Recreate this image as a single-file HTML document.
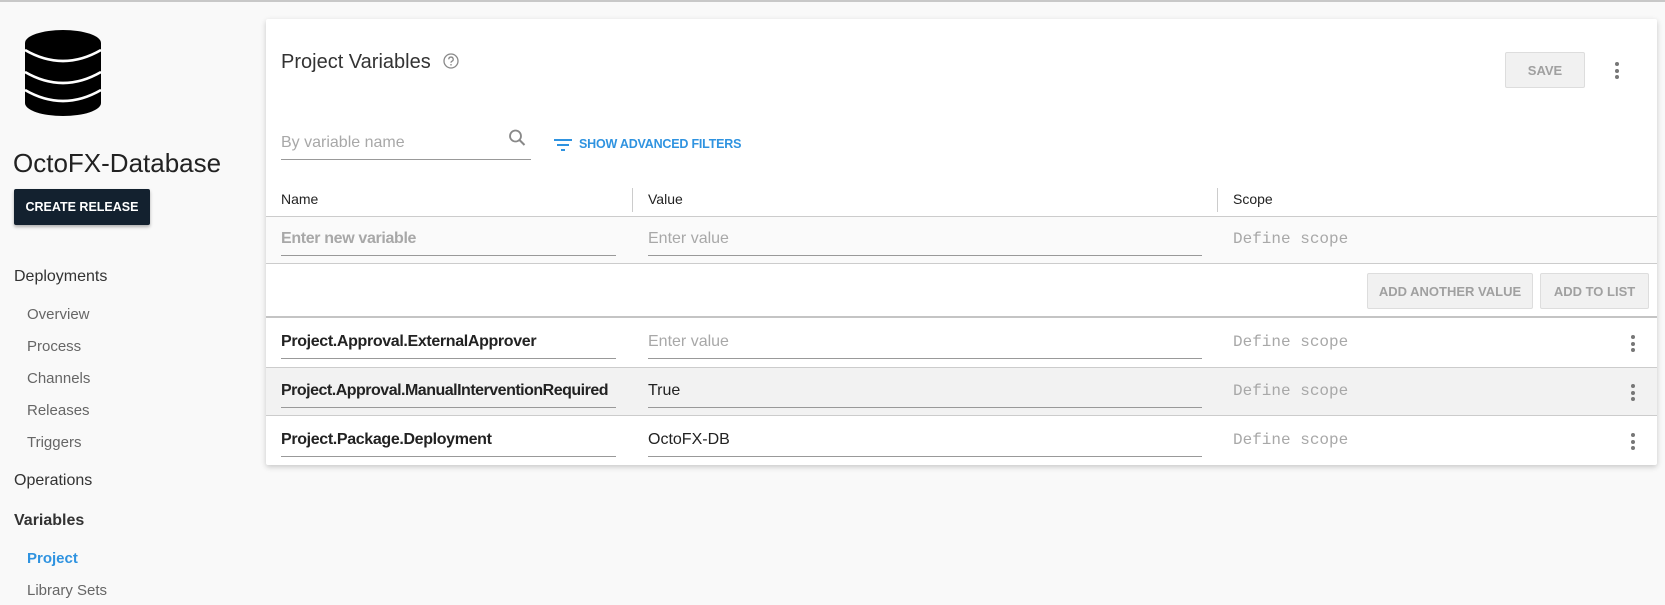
<!DOCTYPE html>
<html><head><meta charset="utf-8"><style>
*{margin:0;padding:0;box-sizing:border-box}
body{width:1665px;height:605px;overflow:hidden;background:#f9f9f9;font-family:"Liberation Sans",sans-serif;position:relative;border-top:2px solid #c8c8c8}
.a{position:absolute;white-space:nowrap}
.card{position:absolute;left:266px;top:17px;width:1391px;height:446px;background:#fff;box-shadow:0 2px 6px rgba(0,0,0,.2);border-radius:2px}
.nav{left:27px;font-size:15px;color:#666}
.ul{position:absolute;height:1px;background:#999}
.btn{position:absolute;background:#f1f1f1;border:1px solid #ddd;color:#a0a0a0;font-size:13px;font-weight:bold;display:flex;align-items:center;justify-content:center;border-radius:2px}
.mono{font-family:"Liberation Mono",monospace;color:#a8a8a8;font-size:16px}
.keb{position:absolute;width:4px}
.keb i{display:block;width:4px;height:4px;border-radius:50%;background:#777;margin-bottom:2.5px}
.b{font-weight:bold;letter-spacing:-.35px}
</style></head><body>
<svg class="a" style="left:24px;top:27px" width="78" height="88" viewBox="0 0 78 88">
<ellipse cx="39" cy="14" rx="38" ry="13" fill="#000"/>
<rect x="1" y="14" width="76" height="60" fill="#000"/>
<ellipse cx="39" cy="74" rx="38" ry="13" fill="#000"/>
<path d="M1 21 Q39 43 77 21" fill="none" stroke="#fff" stroke-width="2.6"/>
<path d="M1 43 Q39 65 77 43" fill="none" stroke="#fff" stroke-width="2.6"/>
<path d="M1 61 Q39 83 77 61" fill="none" stroke="#fff" stroke-width="2.6"/>
</svg>
<div class="a" style="left:13px;top:146px;font-size:26px;color:#222">OctoFX-Database</div>
<div class="a" style="left:14px;top:187px;width:136px;height:36px;background:#13212f;color:#fff;font-size:12.5px;font-weight:bold;display:flex;align-items:center;justify-content:center;box-shadow:0 2px 3px rgba(0,0,0,.3);border-radius:2px">CREATE RELEASE</div>
<div class="a" style="left:14px;top:266px;font-size:16px;color:#333">Deployments</div>
<div class="a nav" style="top:304px">Overview</div>
<div class="a nav" style="top:336px">Process</div>
<div class="a nav" style="top:368px">Channels</div>
<div class="a nav" style="top:400px">Releases</div>
<div class="a nav" style="top:432px">Triggers</div>
<div class="a" style="left:14px;top:470px;font-size:16px;color:#333">Operations</div>
<div class="a" style="left:14px;top:510px;font-size:16px;color:#333;font-weight:bold">Variables</div>
<div class="a nav" style="top:548px;color:#2f93e0;font-weight:bold">Project</div>
<div class="a nav" style="top:580px">Library Sets</div>

<div class="card"></div>
<div class="a" style="left:281px;top:49px;font-size:20px;color:#333">Project Variables</div>
<svg class="a" style="left:443px;top:51px" width="16" height="16" viewBox="0 0 16 16"><circle cx="8" cy="8" r="7" fill="none" stroke="#888" stroke-width="1.3"/><path d="M5.8 6.3a2.2 2.2 0 1 1 3 2c-.7.3-.8.7-.8 1.4" fill="none" stroke="#888" stroke-width="1.3"/><circle cx="8" cy="11.8" r=".8" fill="#888"/></svg>
<div class="btn" style="left:1505px;top:50px;width:80px;height:36px">SAVE</div>
<div class="keb" style="left:1615px;top:60px"><i></i><i></i><i></i></div>

<div class="a" style="left:281px;top:132px;font-size:16px;color:#a8a8a8">By variable name</div>
<svg class="a" style="left:508px;top:127px" width="20" height="18" viewBox="0 0 20 18"><circle cx="7.5" cy="7" r="5.5" fill="none" stroke="#888" stroke-width="1.8"/><path d="M11.5 11l5 5" stroke="#888" stroke-width="2"/></svg>
<div class="ul" style="left:281px;top:157px;width:250px"></div>
<svg class="a" style="left:554px;top:137px" width="18" height="12" viewBox="0 0 18 12"><path d="M0 1h18M3 6h12M7 11h4" stroke="#2f93e0" stroke-width="2"/></svg>
<div class="a" style="left:579px;top:135px;font-size:12.5px;color:#2f93e0;font-weight:bold;letter-spacing:-.2px">SHOW ADVANCED FILTERS</div>

<div class="a" style="left:281px;top:189px;font-size:14px;color:#222">Name</div>
<div class="a" style="left:632px;top:186px;width:1px;height:24px;background:#ccc"></div>
<div class="a" style="left:648px;top:189px;font-size:14px;color:#222">Value</div>
<div class="a" style="left:1217px;top:186px;width:1px;height:24px;background:#ccc"></div>
<div class="a" style="left:1233px;top:189px;font-size:14px;color:#222">Scope</div>
<div class="a" style="left:266px;top:214px;width:1391px;height:48px;background:#fafafa;border-top:1px solid #ccc;border-bottom:1px solid #ccc"></div>
<div class="a b" style="left:281px;top:228px;font-size:16px;color:#a8a8a8">Enter new variable</div>
<div class="ul" style="left:281px;top:253px;width:335px"></div>
<div class="a" style="left:648px;top:228px;font-size:16px;color:#a8a8a8">Enter value</div>
<div class="ul" style="left:648px;top:253px;width:554px"></div>
<div class="a mono" style="left:1233px;top:228px">Define scope</div>
<div class="btn" style="left:1367px;top:271px;width:166px;height:36px">ADD ANOTHER VALUE</div>
<div class="btn" style="left:1540px;top:271px;width:109px;height:36px">ADD TO LIST</div>
<div class="a" style="left:266px;top:314px;width:1391px;height:2px;background:#c4c4c4"></div>

<div class="a b" style="left:281px;top:331px;font-size:16px;color:#222">Project.Approval.ExternalApprover</div>
<div class="ul" style="left:281px;top:356px;width:335px"></div>
<div class="a" style="left:648px;top:331px;font-size:16px;color:#a8a8a8">Enter value</div>
<div class="ul" style="left:648px;top:356px;width:554px"></div>
<div class="a mono" style="left:1233px;top:331px">Define scope</div>
<div class="keb" style="left:1631px;top:333px"><i></i><i></i><i></i></div>

<div class="a" style="left:266px;top:365px;width:1391px;height:49px;background:#f2f2f2;border-top:1px solid #ccc;border-bottom:1px solid #ccc"></div>
<div class="a b" style="left:281px;top:380px;font-size:16px;color:#222;letter-spacing:-.5px">Project.Approval.ManualInterventionRequired</div>
<div class="ul" style="left:281px;top:405px;width:335px"></div>
<div class="a" style="left:648px;top:380px;font-size:16px;color:#222">True</div>
<div class="ul" style="left:648px;top:405px;width:554px"></div>
<div class="a mono" style="left:1233px;top:380px">Define scope</div>
<div class="keb" style="left:1631px;top:382px"><i></i><i></i><i></i></div>

<div class="a b" style="left:281px;top:429px;font-size:16px;color:#222">Project.Package.Deployment</div>
<div class="ul" style="left:281px;top:454px;width:335px"></div>
<div class="a" style="left:648px;top:429px;font-size:16px;color:#222">OctoFX-DB</div>
<div class="ul" style="left:648px;top:454px;width:554px"></div>
<div class="a mono" style="left:1233px;top:429px">Define scope</div>
<div class="keb" style="left:1631px;top:431px"><i></i><i></i><i></i></div>
</body></html>
